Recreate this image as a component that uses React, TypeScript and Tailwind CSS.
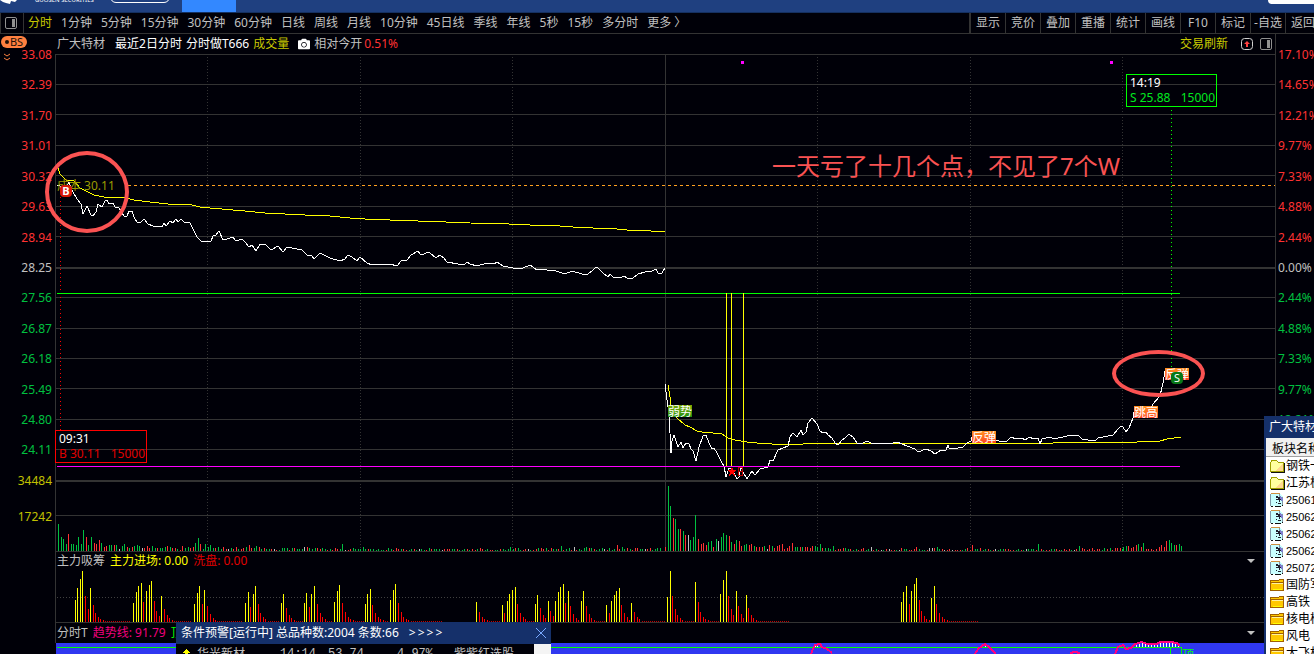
import { FaCamera } from "react-icons/fa";

type Bar = [number, number];

const periods = ["分时", "1分钟", "5分钟", "15分钟", "30分钟", "60分钟", "日线", "周线", "月线", "10分钟", "45日线", "季线", "年线", "5秒", "15秒", "多分时", "更多 〉"];
const tools = ["显示", "竞价", "叠加", "重播", "统计", "画线", "F10", "标记", "-自选", "返回"];

const prices = ["33.08", "32.39", "31.70", "31.01", "30.32", "29.63", "28.94", "28.25", "27.56", "26.87", "26.18", "25.49", "24.80", "24.11", "34484"];
const percents = ["17.10%", "14.65%", "12.21%", "9.77%", "7.33%", "4.88%", "2.44%", "0.00%", "2.44%", "4.88%", "7.33%", "9.77%", "12.21%", "14.65%"];

const gridX = [207, 360, 512, 817, 970, 1122];
const gridY = [54, 84, 114, 145, 175, 206, 236, 297, 328, 358, 388, 419, 449];

const priceDay1 = "57,185 60,186 63,190 66,188 69,182 72,190 77,199 81,204 83,214 87,206 91,215 93,216 96,212 98,204 102,207 105,201 107,200 109,204 113,203 115,207 119,208 124,216 127,216 129,211 132,211 134,217 137,222 141,222 144,219 148,224 153,226 162,227 164,223 166,226 170,221 173,223 176,219 178,222 181,219 184,222 190,223 193,229 197,237 201,241 205,242 211,241 213,236 216,235 219,231 223,240 227,239 233,237 236,241 242,239 246,243 249,247 252,245 256,251 260,244 265,244 271,250 278,246 283,252 287,247 302,250 307,255 312,256 314,259 320,253 328,257 330,258 340,261 345,259 348,255 352,257 357,261 360,257 367,263 372,265 377,264 390,264 397,266 401,261 407,260 411,255 418,251 421,255 429,252 436,258 440,255 444,258 447,262 458,264 465,264 467,262 470,264 477,266 487,263 494,264 497,262 503,266 513,268 516,269 523,268 530,265 537,270 545,269 549,271 553,270 565,274 572,271 582,274 588,274 593,270 596,267 598,268 603,273 608,277 610,274 613,277 620,278 624,276 627,278 633,278 638,274 645,272 652,271 656,269 658,273 662,273 665,268";
const averageDay1 = "58,168 60,174 66,180 74,181 80,188 94,195 104,197 126,198 134,200 150,202 168,204 192,205 200,207 210,208 245,211 265,213 305,215 330,216 350,218 365,219 390,220 418,221 446,222 470,223 509,224 530,225 560,226 573,227 593,228 617,229 627,230 651,231 665,231";
const priceDay2 = "665,384 667,400 669,413 671,453 672,441 674,435 676,441 678,447 681,442 683,448 686,443 689,444 691,449 693,451 696,461 699,447 703,436 706,435 709,443 712,449 714,448 717,453 719,457 722,463 724,466 726,477 729,468 731,468 734,473 737,479 739,477 741,466 743,472 747,479 752,471 755,475 760,469 768,467 770,460 773,461 778,450 788,446 790,437 793,433 797,437 801,430 803,435 806,432 808,423 812,418 817,424 820,431 823,433 826,432 828,435 832,438 835,443 838,445 842,440 845,438 849,434 853,437 857,443 863,443 867,441 871,443 893,443 897,442 902,444 907,446 915,449 918,452 926,449 931,451 935,454 941,450 946,450 948,445 949,448 953,449 963,447 967,443 971,441 973,433 996,440 1002,442 1007,441 1011,437 1016,439 1022,438 1025,440 1030,437 1033,439 1038,438 1040,444 1042,439 1050,437 1054,439 1067,436 1072,435 1078,435 1082,439 1088,440 1096,440 1098,438 1108,436 1113,435 1118,429 1121,426 1123,427 1126,432 1129,428 1133,418 1135,407 1152,406 1153,404 1160,396 1163,383 1165,371 1172,369";
const averageDay2 = "668,385 670,397 671,405 677,418 685,425 690,427 697,431 702,432 713,433 722,434 728,438 735,440 747,442 757,443 772,444 803,444 804,443 1053,443 1054,442 1137,442 1160,441 1167,439 1181,437";

// one bar per minute
const step = 2.54;
const volumeDay1 = [
  27, 14, 12, 7, 17, 7, 7, 6, 14, 7, 21, 14, 6, 14, 8, 7, 11, 8, 4, 5, 6, 6, 6, 6, 2, 5, 7, 4, 3, 4, 5, 6, 5, 3, 3, 5, 3, 5, 3, 3,
  3, 3, 4, 5, 4, 3, 3, 2, 1, 5, 3, 4, 3, 4, 8, 13, 7, 2, 7, 4, 6, 3, 3, 4, 2, 4, 2, 2, 3, 2, 4, 2, 2, 3, 4, 6, 3, 3, 5, 4,
  2, 3, 2, 2, 2, 2, 1, 1, 3, 3, 3, 1, 3, 3, 2, 2, 2, 4, 4, 3, 2, 3, 3, 2, 3, 2, 1, 2, 1, 3, 2, 2, 7, 1, 1, 2, 3, 2, 2, 2,
  4, 2, 2, 2, 2, 1, 2, 1, 1, 1, 3, 2, 1, 3, 2, 2, 2, 1, 1, 2, 2, 1, 2, 2, 1, 1, 3, 2, 2, 2, 2, 1, 2, 2, 2, 2, 2, 2, 1, 1,
  2, 2, 1, 2, 1, 2, 3, 2, 1, 2, 1, 1, 1, 1, 2, 2, 1, 2, 4, 2, 3, 3, 1, 1, 2, 2, 1, 1, 2, 3, 3, 2, 3, 1, 3, 2, 2, 2, 5, 1,
  2, 3, 1, 4, 1, 2, 1, 3, 4, 3, 3, 2, 1, 2, 3, 2, 1, 3, 1, 2, 6, 2, 4, 2, 3, 2, 1, 3, 3, 2, 2, 2, 2, 3, 1, 2, 3, 3,
];
const colorsDay1 = "ggggrggggggrggrrrgrrggrgwggrgrgggwrrrggrgggrgrrgrrggrrggrgggggrggrrwgrrgrrgrrggrgrggrwrggggrgrgggwrgggrrggrgrrrggwrrgg";
const volumeDay2 = [
  4, 65, 45, 33, 32, 22, 22, 20, 16, 16, 11, 14, 36, 12, 7, 8, 6, 9, 10, 4, 12, 10, 14, 18, 16, 15, 9, 7, 11, 10, 5, 6, 7, 6, 7, 5, 4, 4, 4, 5,
  2, 6, 5, 3, 5, 6, 7, 2, 3, 5, 8, 4, 4, 4, 4, 4, 4, 3, 5, 5, 4, 7, 3, 3, 3, 2, 5, 1, 2, 2, 3, 3, 2, 2, 1, 2, 1, 2, 3, 1,
  2, 4, 1, 2, 1, 1, 1, 2, 2, 1, 1, 1, 1, 3, 2, 2, 1, 1, 2, 4, 2, 1, 1, 1, 3, 3, 3, 4, 2, 2, 1, 1, 2, 1, 1, 1, 1, 1, 2, 3,
  1, 6, 2, 2, 3, 1, 2, 2, 1, 1, 2, 1, 2, 2, 2, 2, 1, 1, 1, 2, 1, 1, 2, 2, 2, 2, 1, 7, 2, 1, 1, 1, 2, 2, 2, 1, 1, 2, 1, 2,
  1, 1, 2, 5, 3, 2, 1, 2, 3, 1, 2, 2, 1, 3, 2, 3, 1, 3, 3, 3, 2,
];
const colorsDay2 = "rggrggrgrwgggrrrrggrgwgggrgrgrrggrrgrrrgwrgrrrrrrrrggrgrrrrgggrggggrrrrggrggrrrggwrgrwgrwrrgwrggrrrrgggrwwrggrwrrwrrrggrr";
const volumeClose = [4, 5, 5, 3, 4, 6, 7, 4, 8, 2, 2, 2, 1, 2, 4, 6, 4, 10, 11, 8, 6, 6, 7, 5];
const colorsClose = "ggrrrrgrgrrrrrrrrrgggrgg";

const volumeFill: Record<string, string> = { g: "#00c040", r: "#ff3232", w: "#c0c0c0" };

const entryBars: Bar[] = [
  [75, 22], [77, 34], [80, 43], [82, 51], [90, 34], [133, 19], [136, 30], [138, 36], [141, 39], [146, 31], [149, 37], [151, 41], [161, 26],
  [194, 18], [197, 29], [199, 36], [204, 32], [245, 19], [248, 30], [253, 28], [255, 36], [281, 19], [283, 28], [304, 19], [306, 29], [311, 28], [314, 36],
  [334, 20], [337, 31], [339, 37], [365, 18], [367, 28], [370, 33], [390, 22], [393, 32], [395, 38], [476, 20],
  [502, 17], [507, 21], [509, 28], [512, 32], [515, 35], [535, 18], [537, 27], [548, 21], [555, 21], [558, 30], [560, 35], [563, 38], [568, 31],
  [581, 21], [583, 31], [606, 17], [611, 21], [614, 27], [616, 31], [619, 34], [631, 19],
  [667, 25], [670, 51], [695, 40], [720, 28], [723, 42], [726, 51], [736, 31], [746, 27],
  [901, 20], [903, 30], [906, 36], [911, 31], [914, 38], [916, 44], [931, 24], [934, 36],
];
const washBars: Bar[] = [
  [85, 26], [88, 13], [93, 17], [95, 9], [98, 5], [100, 3], [103, 2], [143, 20], [154, 21], [156, 11], [159, 6], [164, 13], [167, 7], [169, 4], [172, 2],
  [202, 18], [207, 16], [210, 8], [213, 4], [215, 2], [250, 15], [258, 18], [260, 9], [263, 5], [265, 3], [286, 14], [289, 7], [291, 4], [294, 2],
  [309, 15], [317, 18], [320, 9], [322, 5], [325, 3], [342, 19], [345, 10], [348, 5], [350, 3], [353, 2], [372, 17], [375, 9], [378, 5], [380, 3], [383, 2],
  [398, 19], [401, 10], [403, 5], [406, 3], [408, 2], [479, 10], [482, 5], [484, 3], [487, 2], [504, 9], [517, 18], [520, 9], [523, 5], [525, 3],
  [540, 14], [543, 7], [545, 4], [550, 11], [553, 6], [565, 19], [570, 16], [573, 8], [576, 4], [578, 2], [586, 16], [589, 8], [591, 4], [594, 2],
  [609, 9], [621, 17], [624, 9], [627, 5], [629, 2], [634, 10], [637, 5], [639, 3], [672, 26], [675, 13], [677, 7], [680, 4], [682, 2],
  [698, 20], [700, 10], [703, 5], [705, 3], [708, 2], [728, 26], [731, 13], [733, 7], [738, 16], [741, 8], [743, 4], [748, 14], [751, 7], [753, 4], [756, 2],
  [909, 18], [919, 22], [921, 11], [924, 6], [926, 3], [929, 2], [936, 18], [939, 9], [942, 5], [944, 3], [947, 2],
];
const washTails = [[105, 131], [174, 192], [217, 243], [268, 280], [296, 303], [327, 333], [355, 364], [385, 389], [411, 442], [489, 501], [527, 534], [596, 605], [642, 666], [685, 694], [710, 719], [758, 790], [949, 978]];

const groups = [
  { name: "钢铁一", icon: "soft" },
  { name: "江苏板块", icon: "soft" },
  { name: "250619", icon: "doc" },
  { name: "250620", icon: "doc" },
  { name: "250623", icon: "doc" },
  { name: "250626", icon: "doc" },
  { name: "250722", icon: "doc" },
  { name: "国防军工", icon: "folder" },
  { name: "高铁", icon: "folder" },
  { name: "核电核能", icon: "folder" },
  { name: "风电", icon: "folder" },
  { name: "大飞机", icon: "folder" },
];

function VolumeBars({ start, data, colors }: { start: number; data: number[]; colors: string }) {
  return (
    <>
      {data.map((h, i) => (
        <rect key={i} x={Math.round(start + i * step)} y={551 - h} width="1" height={h} fill={volumeFill[colors[i % colors.length]]} />
      ))}
    </>
  );
}

function VerticalGrid({ top, bottom }: { top: number; bottom: number }) {
  return (
    <g stroke="#333333">
      {gridX.map((x) => (
        <line key={x} x1={x + 0.5} x2={x + 0.5} y1={top} y2={bottom} strokeDasharray="1 2" />
      ))}
      <line x1="665.5" x2="665.5" y1={top} y2={bottom} />
      <line x1="55.5" x2="55.5" y1={top} y2={bottom} />
    </g>
  );
}

function PanelIcon() {
  return (
    <svg className="size-3 shrink-0" viewBox="0 0 12 12" fill="none">
      <rect x="0.5" y="0.5" width="11" height="11" rx="1.5" stroke="#909090" />
      <rect x="7" y="2" width="3" height="8" fill="#909090" />
    </svg>
  );
}

function GroupIcon({ kind }: { kind: string }) {
  if (kind === "doc") {
    return (
      <svg className="h-[14px] w-[15px] shrink-0" viewBox="0 0 15 14" shapeRendering="crispEdges">
        <path d="M0 1h10l3 3v9H0z" fill="#c8ffff" />
        <path d="M0 1h1v12H0zM9 1h1v3h3v9h-1V5H9z" fill="#8098a8" />
        <path d="M1 0h9v1H1z" fill="#d09040" />
        <path d="M6 3h2v1h2v2h2v1h-2v2H9V7H6V6h2V5H6zM6 9h1v1H6zM8 10h3v1H8z" fill="#202030" />
        <path d="M10 3h1l2 3v2h-2z" fill="#8080d0" />
        <path d="M1 13h2v1H1zM5 13h6v1H5zM12 12h1v1h-1z" fill="#101010" />
      </svg>
    );
  }
  return (
    <svg className="h-[14px] w-[15px] shrink-0" viewBox="0 0 15 14" shapeRendering="crispEdges">
      {kind === "soft" ? (
        <>
          <path d="M0.5 3.500l1-1v-1h5l2 2h5v9h-13z" fill="#ffffa0" stroke="#a0a000" />
          <path d="M5 12l8-7v7z" fill="#ffd890" />
          <path d="M1 13.500h14M14.500 4v9" stroke="#101010" />
        </>
      ) : (
        <>
          <path d="M0.5 2.500h8l1-1h4v11h-13z" fill="#ffc800" stroke="#a06000" />
          <path d="M2 5.500h11" stroke="#fff0a0" />
          <path d="M0.5 4h13" stroke="#a06000" />
          <path d="M3 11.500h9" stroke="#ffff00" />
        </>
      )}
    </svg>
  );
}

function PaneMenu({ label }: { label: string }) {
  return (
    <button aria-label={label} className="ml-auto mr-5">
      <svg className="h-1 w-2" viewBox="0 0 8 4"><path d="M0 0h8L4 4z" fill="#c0c0c0" /></svg>
    </button>
  );
}

function Header() {
  return (
    <header className="flex h-[13px] shrink-0 items-start overflow-hidden border-b border-[#15305f] bg-[#1f4080]">
      <svg className="h-1 w-[18px]" viewBox="0 0 18 4"><path d="M0 0h17l-2 2-4-1-1 3-4-1-3-1z" fill="#ffffff" /></svg>
      <span className="-mt-1 ml-[17px] w-[75px] whitespace-nowrap text-[6px] leading-[8px] text-white">GUOSEN SECURITIES</span>
      <div className="-mt-3 h-[15px] w-[60px] rounded-md border border-white" />
      <div className="ml-3 h-3 w-[54px] bg-[#3388ff]" />
      <div className="ml-auto h-1 w-[46px] rounded-bl-lg bg-white" />
    </header>
  );
}

function Toolbar() {
  return (
    <nav className="flex h-[21px] shrink-0 border-b border-[#333333] text-[#c0c0c0]">
      <button aria-label="侧栏" className="flex w-6 shrink-0 items-center border-x border-[#333333] pl-1"><PanelIcon /></button>
      <div className="flex min-w-0 flex-1 gap-[9px] overflow-hidden whitespace-nowrap pl-1">
        {periods.map((p, i) => (
          <button key={p} className={i === 0 ? "text-[#c8c800]" : ""}>{p}</button>
        ))}
      </div>
      <div className="-mr-[6px] flex shrink-0 border-l border-[#333333]">
        {tools.map((t) => (
          <button key={t} className="w-[35px] whitespace-nowrap border-l border-[#333333] text-center">{t}</button>
        ))}
      </div>
    </nav>
  );
}

function LeftAxis() {
  return (
    <aside className="relative w-[55px] shrink-0 pr-[3px] text-right leading-[14px]">
      <div className="h-[14px] pl-px pt-[2px]">
        <div className="flex h-3 w-[26px] items-center justify-center gap-px rounded-full bg-[#ff8040] text-[11px] text-[#201008]">
          <span className="size-1 rounded-full bg-[#201008]" />BS
        </div>
      </div>
      <svg className="absolute left-[3px] top-[19px] h-2 w-2" viewBox="0 0 8 8" fill="none" stroke="#ff8040"><path d="M1 1l3 2 3-2M1 5l3 2 3-2" /></svg>
      <div className="flex h-[440px] flex-col justify-between">
        {prices.map((p, i) => (
          <span key={p} className={i < 7 ? "text-[#ff3232]" : i === 7 ? "text-[#c0c0c0]" : i < 14 ? "text-[#00c040]" : "text-[#c0c000]"}>{p}</span>
        ))}
      </div>
      <p className="mt-[22px] text-[#c0c000]">17242</p>
    </aside>
  );
}

function RightAxis() {
  return (
    <aside className="w-[39px] shrink-0 overflow-hidden border-l border-[#333333] pl-[2px] pt-[14px] leading-[14px]">
      <div className="flex h-[440px] flex-col justify-between whitespace-nowrap">
        {percents.map((p, i) => (
          <span key={i} className={i < 7 ? "text-[#ff3232]" : i === 7 ? "text-[#c0c0c0]" : "text-[#00c040]"}>{p}</span>
        ))}
        <span>&nbsp;</span>
      </div>
    </aside>
  );
}

function PriceChart() {
  return (
    <div className="relative h-[427px] shrink-0">
      <svg className="block h-full w-full" viewBox="55 54 1220 427" preserveAspectRatio="none" shapeRendering="crispEdges" fill="none">
        <g stroke="#333333">
          {gridY.map((y) => <line key={y} x1="55" x2="1275" y1={y + 0.5} y2={y + 0.5} />)}
          <line x1="55" x2="1275" y1="268" y2="268" strokeWidth="2" />
          <line x1="55" x2="1275" y1="481" y2="481" strokeWidth="2" />
        </g>
        <VerticalGrid top={54} bottom={481} />
        <line x1="128" x2="1275" y1="185.500" y2="185.500" stroke="#ffa020" strokeDasharray="3 3" />
        <line x1="60.500" x2="60.500" y1="197" y2="430" stroke="#ff0000" strokeDasharray="1 3" />
        <line x1="1171.500" x2="1171.500" y1="110" y2="369" stroke="#00ff00" strokeDasharray="1 3" />
        <line x1="57" x2="1180" y1="293.500" y2="293.500" stroke="#00ff00" />
        <path d="M726.500 293v173M731.500 293v173M743.500 293v173" stroke="#ffff00" />
        <polyline points={averageDay1} stroke="#ffff00" />
        <polyline points={averageDay2} stroke="#ffff00" />
        <polyline points={priceDay1} stroke="#ffffff" />
        <polyline points={priceDay2} stroke="#ffffff" />
        <line x1="57" x2="1180" y1="466.500" y2="466.500" stroke="#ff00ff" />
        <path d="M732 466l1 4h4l-3 2 1 4-3-2-3 2 1-4-3-2h4z" fill="#ff0000" />
        <path d="M738.500 467.500h4v8h-4zM738.500 471.500h4" stroke="#c00000" />
        <path d="M741 61h3v3h-3zM1110 61h3v3h-3z" fill="#ff00ff" />
      </svg>
      <span className="absolute left-[2px] top-[123px] text-[#9c9c00]">成本 30.11</span>
      <span className="absolute left-[5px] top-[131px] size-3 rounded-sm bg-[#d81808] text-center text-[11px] font-bold leading-3 text-white">B</span>
      <span className="absolute left-[613px] top-[351px] h-3 bg-linear-to-b from-[#78a800] to-[#189010] leading-[13px] text-white">弱势</span>
      <span className="absolute left-[917px] top-[377px] h-3 bg-linear-to-b from-[#ff9020] to-[#ff4020] leading-[13px] text-white">反弹</span>
      <span className="absolute left-[1079px] top-[352px] h-3 bg-linear-to-b from-[#ff9020] to-[#ff4020] leading-[13px] text-white">跳高</span>
      <span className="absolute left-[1110px] top-[314px] h-3 bg-linear-to-b from-[#ff9020] to-[#ff4020] leading-[13px] text-white">反弹</span>
      <span className="absolute left-[1116px] top-[318px] size-3 rounded-sm bg-[#087818] text-center text-[11px] leading-3 text-white">S</span>
      <div className="absolute left-[1071px] top-5 h-[33px] w-[91px] border border-[#00ff00] pl-[3px] pr-px leading-[15px] text-[#00e820]">
        <p className="text-white">14:19</p>
        <p className="flex justify-between whitespace-nowrap">S 25.88 <span>15000</span></p>
      </div>
      <div className="absolute left-0 top-[376px] h-[33px] w-[92px] border border-[#ff0000] pl-[3px] pr-px leading-[15px] text-[#e00000]">
        <p className="text-white">09:31</p>
        <p className="flex justify-between whitespace-nowrap">B 30.11 <span>15000</span></p>
      </div>
      <p className="absolute left-[717px] top-[96px] whitespace-nowrap text-2xl leading-8 text-[#fa5252]">一天亏了十几个点，不见了7个W</p>
    </div>
  );
}

function AlertPopup() {
  return (
    <div className="absolute bottom-0 left-[176px] h-8 w-[375px] overflow-hidden bg-[#000008]">
      <div className="flex h-[22px] items-center bg-[#15306a] pl-[5px] pr-1 text-white">
        <span className="whitespace-nowrap">条件预警[运行中] 总品种数:2004 条数:66</span>
        <span className="ml-[10px] flex gap-[2px]">
          <i className="not-italic">&gt;</i>
          <i className="not-italic">&gt;</i>
          <i className="not-italic">&gt;</i>
          <i className="not-italic">&gt;</i>
        </span>
        <button aria-label="关闭" className="ml-auto">
          <svg className="size-3" viewBox="0 0 12 12" stroke="#78a8ff"><path d="M1 1l10 10M11 1L1 11" /></svg>
        </button>
      </div>
      <div className="flex pl-[5px] leading-[20px] text-[#c0c0c0]">
        <svg className="mr-1 mt-[5px] h-3 w-3" viewBox="0 0 12 12" shapeRendering="crispEdges"><path d="M5 0h1v1h1v1h1v1h1v1H7v6H4V4H2V3h1V2h1V1h1z" fill="#ffff00" /></svg>
        <span className="w-[83px]">华光新材</span>
        <span className="w-12 font-['Liberation_Mono',monospace]">14:14</span>
        <span className="w-[69px] font-['Liberation_Mono',monospace]">53.74</span>
        <span className="w-[57px] font-['Liberation_Mono',monospace]">4.97%</span>
        <span>紫紫红选股</span>
        <div className="ml-auto h-[20px] w-[17px] bg-[#f4f4f4]" />
      </div>
    </div>
  );
}

function GroupPopup() {
  return (
    <div className="absolute bottom-0 right-0 h-[238px] w-[50px] overflow-hidden whitespace-nowrap bg-white text-black">
      <h2 className="h-[22px] bg-[#15306a] pl-[5px] leading-[22px] text-white">广大特材</h2>
      <div className="h-full border-l-2 border-[#15306a]">
        <h3 className="h-[19px] border-b border-[#a0a0a0] bg-[#f0f0f0] pl-[6px] leading-[21px]">板块名称</h3>
        <ul>
          {groups.map((g) => (
            <li key={g.name} className="flex h-[17px] items-center gap-px pl-1">
              <GroupIcon kind={g.icon} />
              <span className={g.icon === "doc" ? "font-['Liberation_Sans',sans-serif] text-[11px]" : ""}>{g.name}</span>
            </li>
          ))}
        </ul>
      </div>
    </div>
  );
}

export default function App() {
  return (
    <div className="relative flex h-screen flex-col overflow-hidden bg-[#000008] font-['Noto_Sans','Noto_Sans_CJK_SC',sans-serif] text-[12px] leading-[18px]">
      <Header />
      <Toolbar />
      <main className="flex min-h-0 flex-1">
        <LeftAxis />
        <div className="flex min-w-0 flex-1 flex-col">
          <div className="flex h-5 shrink-0 items-center whitespace-nowrap pl-[2px] pr-[3px] text-[#c0c0c0]">
            <span className="mr-[10px]">广大特材</span>
            <span className="mr-1 text-white">最近2日分时</span>
            <span className="mr-1 text-white">分时做T666</span>
            <span className="mr-[9px] text-[#c8c800]">成交量</span>
            <FaCamera className="mr-1 size-3 text-white" />
            <span className="mr-[2px]">相对今开</span>
            <span className="text-[#ff3232]">0.51%</span>
            <button className="ml-auto mr-[13px] text-[#c8c800]">交易刷新</button>
            <button aria-label="上移" className="mr-[7px]">
              <svg className="size-3" viewBox="0 0 12 12" fill="none"><rect x="0.5" y="0.5" width="11" height="11" rx="3" stroke="#d0d0d0" /><path d="M6 3l3 3H7v3H5V6H3z" fill="#ff4040" /></svg>
            </button>
            <button aria-label="面板"><PanelIcon /></button>
          </div>
          <PriceChart />
          <svg className="block h-[70px] w-full shrink-0" viewBox="55 481 1220 70" preserveAspectRatio="none" shapeRendering="crispEdges">
            <rect x="55" y="481" width="1220" height="1" fill="#333333" />
            <rect x="55" y="515" width="1220" height="1" fill="#333333" />
            <VerticalGrid top={481} bottom={551} />
            <VolumeBars start={58} data={volumeDay1} colors={colorsDay1} />
            <VolumeBars start={665} data={volumeDay2} colors={colorsDay2} />
            <VolumeBars start={1123} data={volumeClose} colors={colorsClose} />
          </svg>
          <div className="flex h-[18px] shrink-0 items-center gap-[5px] border-l border-t border-[#333333] pl-px text-[#c0c0c0]">
            <span>主力吸筹</span>
            <span className="text-[#ffff00]">主力进场: 0.00</span>
            <span className="text-[#e00000]">洗盘: 0.00</span>
            <PaneMenu label="主力吸筹设置" />
          </div>
          <svg className="block h-[53px] w-full shrink-0" viewBox="55 569 1220 53" preserveAspectRatio="none" shapeRendering="crispEdges">
            <path d="M55.500 569v53" stroke="#333333" />
            <path d="M57 597.500H1275" stroke="#404040" strokeDasharray="1 2" />
            {entryBars.map(([x, h]) => <rect key={x} x={x} y={622 - h} width="1" height={h} fill="#ffff00" />)}
            {washBars.map(([x, h]) => <rect key={x} x={x} y={622 - h} width="1" height={h} fill="#ff0000" />)}
            {washTails.map(([a, b]) => <line key={a} x1={a} x2={b} y1="621.500" y2="621.500" stroke="#c00000" strokeDasharray="1 1" />)}
          </svg>
          <div className="flex h-[21px] shrink-0 items-center gap-[5px] border-l border-t border-[#333333] pl-px text-[#c0c0c0]">
            <span>分时T</span>
            <span className="text-[#f0007c]">趋势线: 91.79</span>
            <span className="text-[#00ff00]">顶</span>
            <PaneMenu label="分时T设置" />
          </div>
          <div className="relative h-[11px] shrink-0">
            <svg className="block h-full w-full overflow-visible" viewBox="55 643 1220 11" preserveAspectRatio="none" shapeRendering="crispEdges" fill="none">
              <rect x="56" y="643" width="1219" height="11" fill="#3038f0" />
              <path d="M815.500 645v2M817.500 644v3M820.500 644v3M982.500 645v2M985.500 644v3M988.500 645v2M1120.500 646v2M1123.500 645v2M1136.500 644v3M1139.500 643v4M1142.500 642v5M1145.500 643v4M1148.500 644v3M1151.500 644v3M1154.500 644v3M1157.500 643v4M1160.500 642v5M1163.500 642v5M1166.500 642v5M1169.500 642v5M1172.500 642v5M1175.500 643v4M1178.500 645v2" stroke="#ffffff" />
              <path d="M57 647.500H1181M1170.500 647v7M1181.500 647v7" stroke="#00ff00" />
              <g stroke="#ff0080" strokeWidth="2">
                <polyline points="811,654 813,649 815,645 820,644 822,647 827,649 832,653" />
                <polyline points="975,654 978,649 982,646 985,644 989,647 996,654" />
                <polyline points="1070,653 1075,652 1080,653" />
                <polyline points="1115,654 1118,647 1123,645 1126,649 1131,648 1135,644 1142,642 1147,644 1157,644 1160,642 1170,642 1177,643 1180,646" />
              </g>
            </svg>
            <span className="absolute left-[1127px] top-[3px] text-[#00ff00]">顶</span>
          </div>
        </div>
        <RightAxis />
      </main>
      <div className="absolute left-[45px] top-[151px] h-[82px] w-[84px] rounded-[50%] border-4 border-[#fa5252]" />
      <div className="absolute left-[1112px] top-[350px] h-[47px] w-[93px] rounded-[50%] border-4 border-[#fa5252]" />
      <AlertPopup />
      <GroupPopup />
    </div>
  );
}
